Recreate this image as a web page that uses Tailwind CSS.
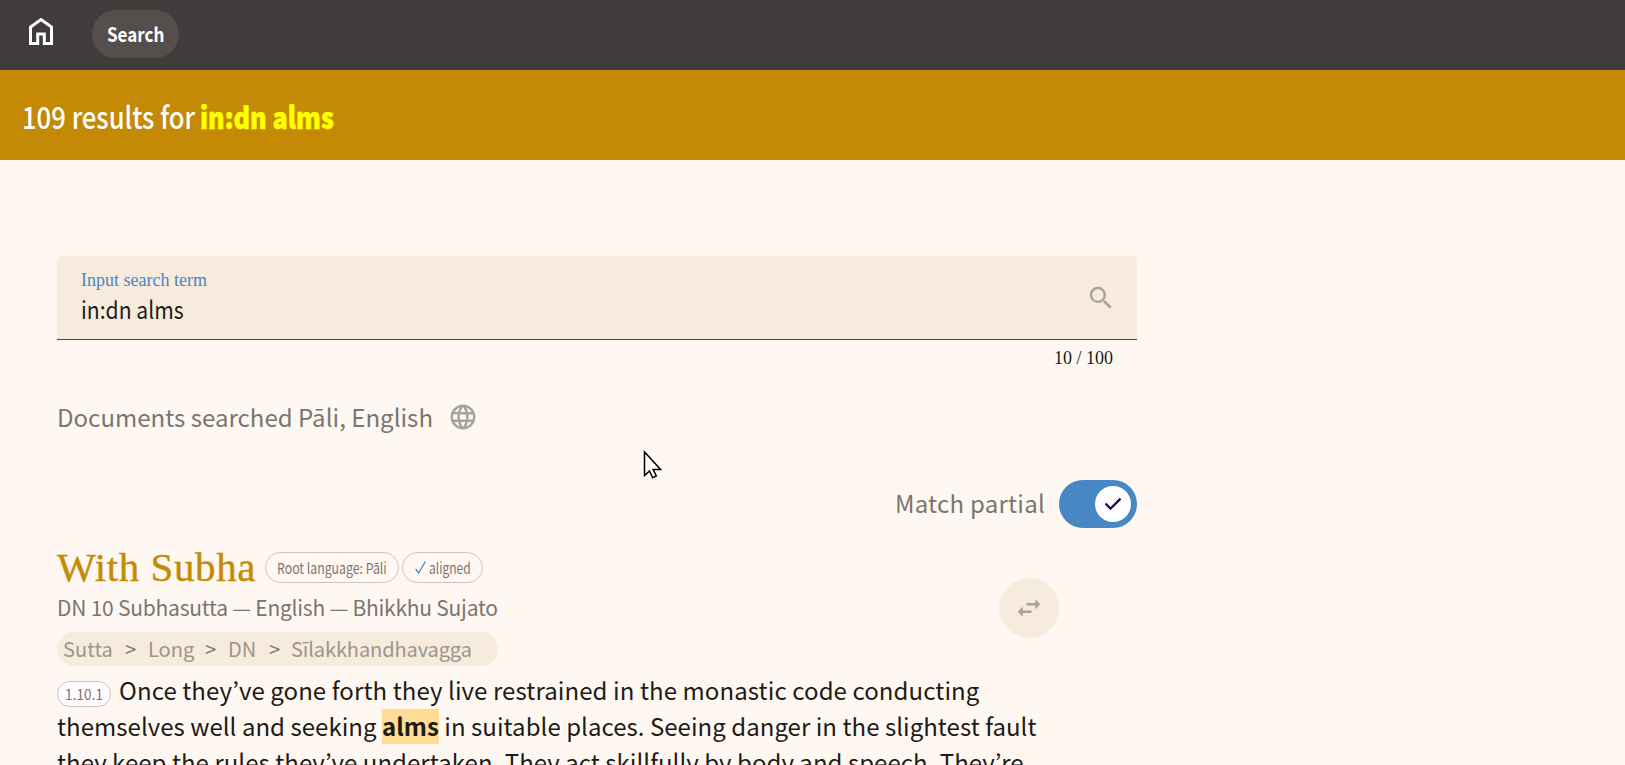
<!DOCTYPE html>
<html lang="en">
<head>
<meta charset="utf-8">
<title>Search</title>
<script src="https://cdn.jsdelivr.net/npm/@tailwindcss/browser@4"></script>
</head>
<body class="h-[765px] overflow-hidden bg-[#fff8f2] font-['Noto_Sans_CJK_JP','Noto_Sans',sans-serif] text-[#1c1b17] whitespace-nowrap">
<nav class="flex h-[70px] bg-[#403c3b] pl-[29px] text-white">
  <svg class="mt-[17px] h-7 w-6 shrink-0" viewBox="0 0 24 28" fill="none" stroke="currentColor" stroke-width="3"><path d="M1.500 26.500V10L12 2.600 22.500 10v16.500h-7.200v-9.500H8.700v9.500z"/></svg>
  <a class="mt-[10px] ml-[39px] flex h-12 w-[87px] items-center rounded-full bg-[#544f4d] pl-[15px] text-[20px] leading-[46px] font-bold"><span class="origin-left scale-x-[.85]">Search</span></a>
</nav>
<header class="flex h-[90px] bg-[#c58a05] pl-[22px] text-[30px] leading-[92px] font-medium text-white">
  <span class="w-[178px] origin-left scale-x-[.855]">109 results for</span>
  <b class="origin-left scale-x-[.84] font-black text-[#ffff00] [-webkit-text-stroke:.6px_#ffff00]">in:dn alms</b>
</header>
<main class="ml-[57px] w-[1080px] pt-24">
  <div class="flex h-[84px] justify-between rounded-t-[5px] border-b border-[#47433f] bg-[#f7ebdd] pr-[21px] pl-6">
    <div>
      <div class="mt-[14px] h-[20px] font-['Liberation_Serif',serif] text-[18px] leading-[20px] text-[#4787c4]">Input search term</div>
      <div class="h-[36px] origin-left scale-x-[.88] text-[24px] leading-[37px]">in:dn alms</div>
    </div>
    <svg class="mt-[27px] h-[30px] w-[30px]" viewBox="0 0 24 24" fill="#a8a399"><path d="M15.500 14h-.79l-.28-.27A6.471 6.471 0 0 0 16 9.500 6.500 6.500 0 1 0 9.500 16c1.610 0 3.090-.59 4.230-1.570l.27.28v.79l5 4.990L20.490 19l-4.990-5zm-6 0C7.010 14 5 11.990 5 9.500S7.010 5 9.500 5 14 7.010 14 9.500 11.990 14 9.500 14z"/></svg>
  </div>
  <div class="mt-[8px] h-[22px] pr-6 text-right font-['Liberation_Serif',serif] text-[18px] leading-[20px]">10 / 100</div>
  <div class="mt-[29px] flex h-[36px] items-center text-[24px] leading-[36px] text-[#7a756f]">
    <span class="tracking-[.03px]">Documents searched Pāli, English</span>
    <svg class="ml-[15px] h-[30px] w-[30px]" viewBox="0 0 24 24" fill="#a8a399"><path d="M11.990 2C6.470 2 2 6.480 2 12s4.470 10 9.990 10C17.520 22 22 17.520 22 12S17.520 2 11.990 2zm6.930 6h-2.950a15.650 15.650 0 0 0-1.380-3.560A8.030 8.030 0 0 1 18.920 8zM12 4.040c.83 1.200 1.480 2.530 1.910 3.960h-3.820c.43-1.430 1.080-2.760 1.910-3.960zM4.260 14C4.100 13.360 4 12.690 4 12s.1-1.360.26-2h3.380c-.08.66-.14 1.320-.14 2s.06 1.340.14 2H4.260zm.82 2h2.950c.32 1.250.78 2.450 1.380 3.560A7.987 7.987 0 0 1 5.080 16zm2.950-8H5.080a7.987 7.987 0 0 1 4.330-3.560A15.650 15.650 0 0 0 8.030 8zM12 19.960c-.83-1.200-1.480-2.530-1.910-3.960h3.820c-.43 1.430-1.080 2.760-1.910 3.960zM14.340 14H9.660c-.09-.66-.16-1.320-.16-2s.07-1.350.16-2h4.680c.09.65.16 1.320.16 2s-.07 1.340-.16 2zm.25 5.560c.6-1.110 1.060-2.310 1.380-3.560h2.950a8.030 8.030 0 0 1-4.330 3.560zM16.360 14c.08-.66.14-1.320.14-2s-.06-1.340-.14-2h3.380c.16.64.26 1.310.26 2s-.1 1.360-.26 2h-3.380z"/></svg>
  </div>
  <div class="mt-[45px] flex h-12 items-center justify-end gap-[14px] text-[24px] leading-[46px] text-[#7a756f]">
    <span class="mb-[2px] tracking-[.25px]">Match partial</span>
    <div class="flex h-12 w-[78px] items-center justify-end rounded-full bg-[#4787c4] pr-1.5">
      <div class="flex h-9 w-9 items-center justify-center rounded-full bg-white"><svg class="h-6 w-6" viewBox="0 0 24 24" fill="#21005d"><path d="M9.550 18.200 3.650 12.300 5.275 10.675 9.550 14.950 18.725 5.775 20.350 7.400Z"/></svg></div>
    </div>
  </div>
  <article class="w-[1002px]">
    <div class="mt-[15px] flex h-[48px] items-center">
      <h2 class="w-[208px] font-['Liberation_Serif',serif] text-[41px] leading-[46px] tracking-[.6px] text-[#c58a05] [-webkit-text-stroke:.4px_#c58a05]">With Subha</h2>
      <div class="flex h-[31px] w-[134px] items-center rounded-full border border-[#cfc4bc] pl-[11px] text-[15px] leading-[27px] text-[#7a756f]"><span class="origin-left scale-x-[.82]">Root language: Pāli</span></div>
      <div class="ml-[3px] flex h-[31px] w-[81px] items-center rounded-full border border-[#cfc4bc] pl-3 text-[15px] leading-[27px] text-[#7a756f]"><svg class="mr-[3px] h-[13px] w-[11px]" viewBox="0 0 11 13" fill="none" stroke="#4787c4" stroke-width="1.300"><path d="M.6 7.800 3.600 12 10.400.5"/></svg><span class="origin-left scale-x-[.8]">aligned</span></div>
    </div>
    <div class="h-[37px] text-[21px] leading-[33px] tracking-[-.23px] text-[#7a756f]">DN 10 Subhasutta — English — Bhikkhu Sujato</div>
    <div class="mt-1 flex h-[34px] w-[441px] items-center rounded-full bg-[#f7ebdd] pl-1.5 text-[20px] leading-[34px] text-[#9b958d]">
      <span class="w-[62px] tracking-[.1px]">Sutta</span><span class="w-[23px] text-[#7a756f]">&gt;</span>
      <span class="w-[57px]">Long</span><span class="w-[23px] text-[#7a756f]">&gt;</span>
      <span class="w-[41px]">DN</span><span class="w-[22px] text-[#7a756f]">&gt;</span>
      <span class="tracking-[-.1px]">Sīlakkhandhavagga</span>
    </div>
    <div class="mt-[6px] text-[24px] leading-[36px] tracking-[.09px]">
      <div class="flex h-9"><span class="mt-[9px] mr-2 flex h-[26px] w-[54px] items-center justify-center rounded-full border border-[#cfc4bc] bg-[#fffbff] text-[15px] leading-6 text-[#7a756f]"><span class="scale-x-[.9]">1.10.1</span></span>Once they’ve gone forth they live restrained in the monastic code conducting</div>
      <div class="flex h-9 tracking-[.04px]"><span>themselves well and seeking&nbsp;</span><b class="mt-px h-[35px] bg-[#ffdb94] leading-[34px]">alms</b><span>&nbsp;in suitable places. Seeing danger in the slightest fault</span></div>
      <div class="h-9 tracking-[.04px]">they keep the rules they’ve undertaken. They act skillfully by body and speech. They’re</div>
    </div>
  </article>
</main>
<div class="absolute top-[578px] left-[999px] flex h-[60px] w-[60px] items-center justify-center rounded-full bg-[#f7ebdd]"><svg class="h-[30px] w-[30px]" viewBox="0 0 24 24" fill="#a8a399"><path d="M6.990 11 3 15l3.990 4v-3H14v-2H6.990v-3zM21 9l-3.990-4v3H10v2h7.010v3L21 9z"/></svg></div>
<svg class="absolute top-[450px] left-[643px] h-[30px] w-5" viewBox="0 0 20 30" fill="#fff" stroke="#000" stroke-width="1.500"><path d="M1.500 2v23.500l5-4.500 3.200 6.800 3.600-1.800-3.200-6.500h7.500z"/></svg>
</body>
</html>
